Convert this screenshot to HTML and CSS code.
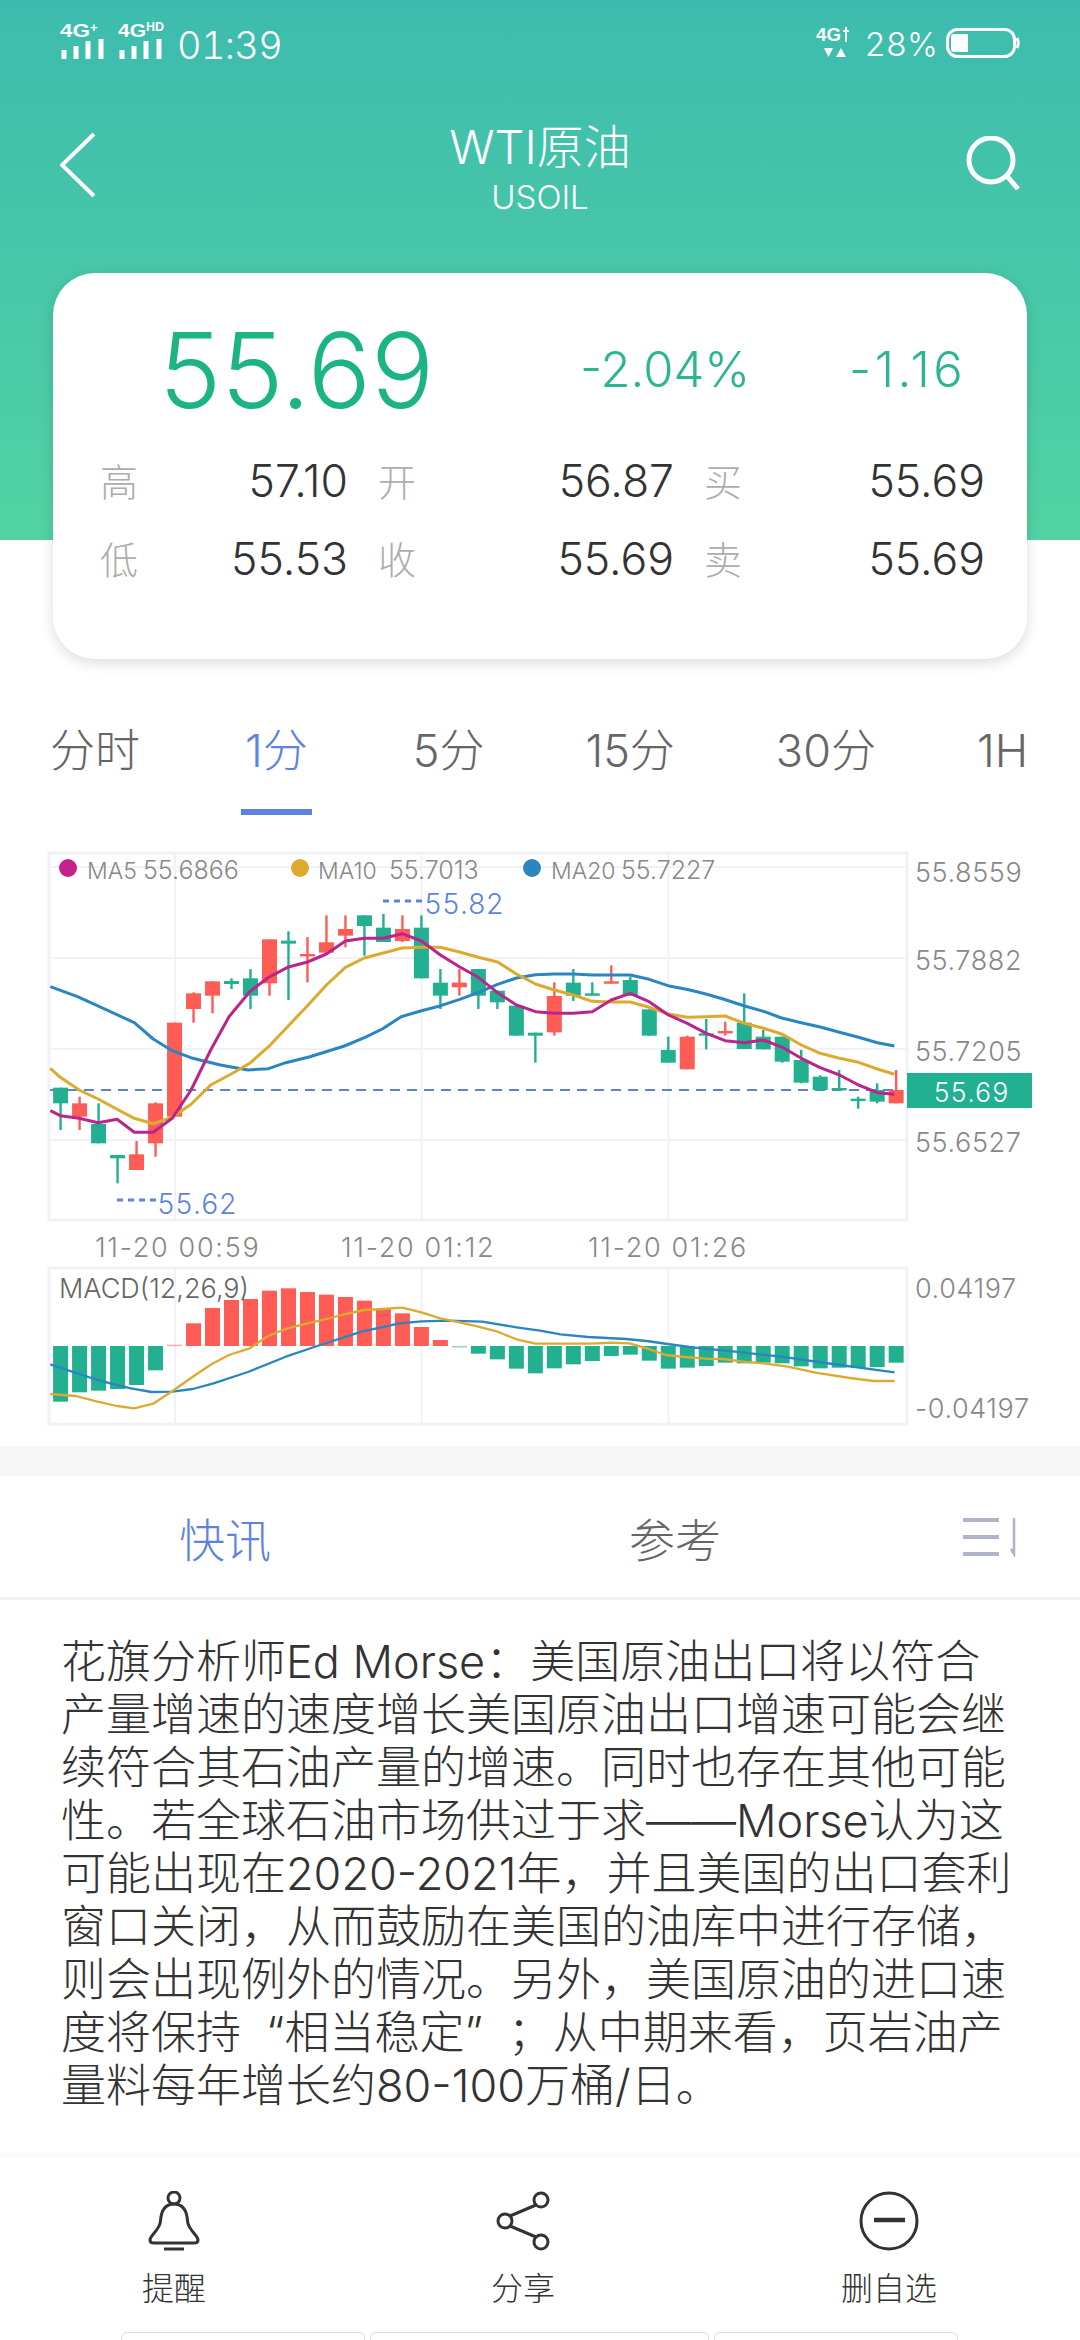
FILE: index.html
```html
<!DOCTYPE html>
<html lang="zh-CN">
<head>
    <meta charset="utf-8">
    <title>WTI原油</title>
    <link rel="stylesheet" href="styles.css">
</head>
<body>
<div class="phone">
    <header class="top">
        <div class="status">
            <svg class="net" viewBox="0 -8 50 46">
                <text x="0" y="12" class="net-text" textLength="30" lengthAdjust="spacingAndGlyphs">4G</text>
                <text x="30" y="7" class="net-small">+</text>
                <path d="M4 34v-9M16 34v-13M28 34v-18M41 34v-20" class="net-bars"/>
            </svg>
            <svg class="net second" viewBox="0 -8 50 46">
                <text x="0" y="12" class="net-text" textLength="28" lengthAdjust="spacingAndGlyphs">4G</text>
                <text x="28" y="6" class="net-small" textLength="18" lengthAdjust="spacingAndGlyphs">HD</text>
                <path d="M4 34v-9M16 34v-13M28 34v-18M41 34v-20" class="net-bars"/>
            </svg>
            <span class="time">01:39</span>
            <span class="status-gap"></span>
            <svg class="net-right" viewBox="0 -8 36 44">
                <text x="0" y="16" class="net-text" textLength="25" lengthAdjust="spacingAndGlyphs">4G</text>
                <path d="M30 2v15M27 6h6" class="net-thin"/>
                <path d="M8 23h9l-4.500 9zM20 32h10l-5-9z" fill="#fff"/>
            </svg>
            <span class="battery-pct">28%</span>
            <svg class="battery" viewBox="0 0 74 30">
                <rect x="1.500" y="1.500" width="67" height="27" rx="10" class="battery-line"/>
                <path d="M8 6h14v18H8q-3 0-3-3V9q0-3 3-3z" fill="#fff"/>
                <path d="M71 10q2.500 5 0 10" class="battery-line"/>
            </svg>
        </div>
        <nav class="nav">
            <div class="nav-icon">
                <svg width="36" height="66" viewBox="0 0 36 66"><path d="M34 2 2 33l32 31" class="nav-stroke"/></svg>
            </div>
            <div class="title">
                <div class="title-main">WTI原油</div>
                <div class="title-sub">USOIL</div>
            </div>
            <div class="nav-icon right">
                <svg width="54" height="54" viewBox="0 0 54 54"><circle cx="25" cy="24" r="22" class="nav-stroke wide"/><path d="m41 40 11 13" class="nav-stroke wide"/></svg>
            </div>
        </nav>
    </header>

    <section class="card">
        <div class="quote">
            <span class="price">55.69</span>
            <span class="pct">-2.04%</span>
            <span class="diff">-1.16</span>
        </div>
        <div class="stats">
            <div class="stat"><span class="stat-label">高</span><span class="stat-value">57.10</span></div>
            <div class="stat"><span class="stat-label">开</span><span class="stat-value">56.87</span></div>
            <div class="stat"><span class="stat-label">买</span><span class="stat-value">55.69</span></div>
            <div class="stat"><span class="stat-label">低</span><span class="stat-value">55.53</span></div>
            <div class="stat"><span class="stat-label">收</span><span class="stat-value">55.69</span></div>
            <div class="stat"><span class="stat-label">卖</span><span class="stat-value">55.69</span></div>
        </div>
    </section>

    <div class="periods">
        <span class="period">分时</span>
        <span class="period active">1分</span>
        <span class="period">5分</span>
        <span class="period">15分</span>
        <span class="period">30分</span>
        <span class="period">1H</span>
    </div>

    <svg id="kline" class="chart" width="1080" height="606" viewBox="0 840 1080 606">
        <g id="kline-grid"></g>
        <path d="M50 1090H895" class="last-line"/>
        <g id="kline-candles"></g>
        <g id="kline-lines"></g>
        <circle cx="68" cy="868" r="9" fill="#c6228e"/>
        <text x="87" y="879" class="legend-name">MA5</text>
        <text x="143" y="879" class="legend">55.6866</text>
        <circle cx="300" cy="868" r="9" fill="#dcaa2e"/>
        <text x="318" y="879" class="legend-name">MA10</text>
        <text x="389" y="879" class="legend">55.7013</text>
        <circle cx="532" cy="868" r="9" fill="#2a86c0"/>
        <text x="551" y="879" class="legend-name">MA20</text>
        <text x="621" y="879" class="legend">55.7227</text>
        <path d="M383 901h39" class="peak-line"/>
        <text x="424" y="914" class="peak">55.82</text>
        <path d="M117 1200h40" class="peak-line"/>
        <text x="157" y="1214" class="peak">55.62</text>
        <text x="915" y="882" class="axis">55.8559</text>
        <text x="915" y="970" class="axis">55.7882</text>
        <text x="915" y="1061" class="axis">55.7205</text>
        <text x="915" y="1152" class="axis">55.6527</text>
        <rect x="907" y="1073" width="125" height="35" fill="#21b092"/>
        <text x="971" y="1102" class="tag">55.69</text>
        <text x="95" y="1257" class="axis-time">11-20 00:59</text>
        <text x="341" y="1257" class="axis-time">11-20 01:12</text>
        <text x="588" y="1257" class="axis-time">11-20 01:26</text>

        <g id="macd-grid"></g>
        <g id="macd-bars"></g>
        <g id="macd-lines"></g>
        <text x="59" y="1298" class="macd-name">MACD(12,26,9)</text>
        <text x="915" y="1298" class="axis">0.04197</text>
        <text x="915" y="1418" class="axis">-0.04197</text>
    </svg>

    <div class="divider"></div>

    <div class="news-tabs">
        <span class="news-tab active">快讯</span>
        <span class="news-tab">参考</span>
        <svg class="sort" width="56" height="40" viewBox="0 0 56 40">
            <path d="M0 3h36M0 20h36M0 37h36" stroke="#b0b3cc" stroke-width="4"/>
            <path d="M51 1v36l-3-5" fill="none" stroke="#b0b3cc" stroke-width="2.500"/>
        </svg>
    </div>

    <article class="news">花旗分析师Ed Morse：美国原油出口将以符合<br>产量增速的速度增长美国原油出口增速可能会继<br>续符合其石油产量的增速。同时也存在其他可能<br>性。若全球石油市场供过于求——Morse认为这<br>可能出现在2020-2021年，并且美国的出口套利<br>窗口关闭，从而鼓励在美国的油库中进行存储，<br>则会出现例外的情况。另外，美国原油的进口速<br>度将保持<span class="quote-open">“</span>相当稳定<span class="quote-close">”</span>；从中期来看，页岩油产<br>量料每年增长约80-100万桶/日。</article>

    <footer class="actions">
        <div class="action">
            <svg class="action-icon" width="54" height="60" viewBox="0 0 54 60">
                <ellipse cx="27" cy="7" rx="6" ry="6"/>
                <path d="M27 13C17 13 14 22 13.500 30 13 39 3 44 3 49q0 3 4 3h40q4 0 4-3C51 44 41 39 40.500 30 40 22 37 13 27 13z"/>
                <path d="M17 58h20"/>
            </svg>
            <span class="action-label">提醒</span>
        </div>
        <div class="action">
            <svg class="action-icon" width="54" height="60" viewBox="0 0 54 60">
                <circle cx="45" cy="9" r="7"/><circle cx="9" cy="30" r="7"/><circle cx="45" cy="51" r="7"/>
                <path d="M14 25 40 14M14 35 40 46"/>
            </svg>
            <span class="action-label">分享</span>
        </div>
        <div class="action">
            <svg class="action-icon" width="60" height="60" viewBox="0 0 60 60">
                <circle cx="30" cy="30" r="28"/><path d="M15 29h31" class="thick"/>
            </svg>
            <span class="action-label">删自选</span>
        </div>
    </footer>
    <div class="keys">
        <span class="key small"></span>
        <span class="key wide"></span>
        <span class="key small"></span>
    </div>
</div>
<script src="chart.js"></script>
</body>
</html>
```

FILE: styles.css
```css
* {
    box-sizing: border-box;
}
html, body {
    margin: 0;
    padding: 0;
    background: #fff;
}
body {
    font-family: Inter, "Noto Sans CJK SC", sans-serif;
    font-weight: 300;
}
.phone {
    width: 1080px;
    height: 2340px;
    overflow: hidden;
    display: flex;
    flex-direction: column;
    background: #fff;
}

/* header */
.top {
    height: 540px;
    flex: none;
    background: linear-gradient(#3dbbae, #52d3a3);
    color: #fff;
}
.status {
    display: flex;
    align-items: flex-start;
    height: 98px;
    padding: 17px 60px 0;
}
.net {
    width: 50px;
    height: 46px;
    flex: none;
}
.second {
    margin-left: 8px;
}
.net-text {
    font: 700 19px "Liberation Sans", sans-serif;
    fill: #fff;
}
.net-small {
    font: 700 13px "Liberation Sans", sans-serif;
    fill: #fff;
}
.net-bars {
    stroke: #fff;
    stroke-width: 5;
    fill: none;
}
.net-thin {
    stroke: #fff;
    stroke-width: 2;
    fill: none;
}
.time {
    margin-left: 9px;
    margin-top: 8px;
    font-size: 38px;
    line-height: 40px;
    font-variant-numeric: tabular-nums;
    letter-spacing: -.7px;
}
.status-gap {
    flex: 1;
}
.net-right {
    width: 36px;
    height: 44px;
}
.battery-pct {
    margin-left: 12px;
    margin-top: 10px;
    font-size: 33px;
    line-height: 34px;
    font-variant-numeric: tabular-nums;
}
.battery {
    width: 74px;
    height: 30px;
    margin-left: 8px;
    margin-top: 11px;
}
.battery-line {
    fill: none;
    stroke: #fff;
    stroke-width: 3;
}
.nav {
    display: flex;
    align-items: flex-start;
    padding: 0 60px;
}
.nav-icon {
    width: 70px;
    padding-top: 34px;
}
.nav-icon.right {
    display: flex;
    justify-content: flex-end;
    padding-top: 38px;
}
.nav-stroke {
    fill: none;
    stroke: #fff;
    stroke-width: 4;
}
.nav-stroke.wide {
    stroke-width: 5;
}
.title {
    flex: 1;
    text-align: center;
}
.title-main {
    margin-top: 21px;
    font-size: 47px;
    line-height: 56px;
}
.title-sub {
    font-size: 33px;
    line-height: 36px;
    margin-top: 4px;
}

/* quote card */
.card {
    flex: none;
    height: 386px;
    margin: -267px 53px 0;
    padding: 0 46px 0 47px;
    background: #fff;
    border-radius: 42px;
    box-shadow: 0 4px 14px rgba(0, 0, 0, .14);
    position: relative;
}
.quote {
    display: flex;
    align-items: center;
    height: 165px;
    padding: 28px 0 0 59px;
}
.price {
    width: 421px;
    font-size: 105px;
    line-height: 134px;
    color: #1cb385;
}
.pct {
    width: 269px;
    font-size: 49px;
}
.diff {
    font-size: 49px;
    letter-spacing: 3.500px;
}
.pct, .diff {
    color: #2bb692;
}
.stats {
    display: grid;
    grid-template-columns: 244px 292px 277px;
    column-gap: 34px;
    row-gap: 18px;
    margin-top: 13px;
}
.stat {
    display: flex;
    justify-content: space-between;
    align-items: center;
    height: 60px;
}
.stat-label {
    margin-top: -3px;
    font-size: 38px;
    color: #adadad;
}
.stat-value {
    margin-right: -4px;
    font-size: 44.500px;
    color: #333;
}

/* period tabs */
.periods {
    flex: none;
    display: flex;
    justify-content: space-between;
    align-items: flex-start;
    margin-top: 62px;
    padding: 0 52px 0 50px;
    height: 94px;
}
.period {
    font-size: 45px;
    line-height: 60px;
    padding-bottom: 28px;
    color: #666;
}
.period.active {
    padding-left: 4px;
    padding-right: 4px;
    color: #5e82e0;
    border-bottom: 6px solid #5e82e0;
}

/* charts */
.chart {
    display: block;
    flex: none;
}
#kline {
    margin-top: 25px;
}
.grid-line {
    stroke: #f0f2f7;
    stroke-width: 2;
    fill: none;
}
.grid-box {
    stroke: #f0f2f7;
    stroke-width: 3;
    fill: none;
}
.last-line {
    stroke: #5f82c9;
    stroke-width: 2;
    stroke-dasharray: 10 7;
}
.ma-line {
    fill: none;
    stroke-width: 3;
    stroke-linejoin: round;
}
.macd-line {
    fill: none;
    stroke-width: 2.300;
    stroke-linejoin: round;
}
.legend {
    font-size: 25px;
    fill: #888;
}
.legend-name {
    font-size: 23px;
    fill: #888;
}
.axis {
    font-size: 27px;
    letter-spacing: .6px;
    fill: #888;
}
.axis-time {
    font-size: 27px;
    letter-spacing: 1.700px;
    fill: #888;
}
.peak {
    font-size: 28px;
    fill: #5e82e0;
    font-variant-numeric: tabular-nums;
}
.peak-line {
    stroke: #5e82e0;
    stroke-width: 3;
    stroke-dasharray: 6 5;
}
.tag {
    font-size: 26.500px;
    fill: #fff;
    text-anchor: middle;
    font-variant-numeric: tabular-nums;
}
.macd-name {
    font-size: 27px;
    fill: #666;
}

/* news */
.divider {
    flex: none;
    height: 30px;
    background: #f6f6f6;
}
.news-tabs {
    flex: none;
    display: grid;
    grid-template-columns: 450px 450px 1fr;
    align-items: center;
    height: 124px;
    border-bottom: 3px solid #f0f2f6;
}
.news-tab {
    text-align: center;
    font-size: 46px;
    color: #666;
}
.news-tab.active {
    color: #5e82e0;
}
.sort {
    margin-left: 63px;
}
.news {
    flex: 1;
    padding: 35px 0 0 61px;
    font-size: 45px;
    line-height: 53px;
    color: #333;
    white-space: nowrap;
}
.quote-open {
    padding-left: 25px;
}
.quote-close {
    padding-right: 25px;
}

/* bottom actions */
.actions {
    flex: none;
    display: grid;
    grid-template-columns: 348px 350px 382px;
    height: 175px;
    padding-top: 34px;
    box-shadow: 0 -3px 5px rgba(0, 0, 0, .03);
}
.action {
    display: flex;
    flex-direction: column;
    align-items: center;
}
.action-icon {
    flex: none;
    fill: none;
    stroke: #333;
    stroke-width: 3;
}
.action-icon .thick {
    stroke-width: 4.500;
}
.action-label {
    margin-top: 16px;
    font-size: 32px;
    line-height: 44px;
    color: #333;
}
.keys {
    flex: none;
    display: flex;
    gap: 5px;
    height: 8px;
    padding-left: 121px;
}
.key {
    height: 20px;
    background: #fff;
    border: 1px solid #ddd;
    border-radius: 6px;
}
.key.small {
    width: 244px;
}
.key.wide {
    width: 339px;
}
```

FILE: chart.js
```js
// values are read in a 2.904 x 3 scale, so they stay close to the source picture
const NS = "http://www.w3.org/2000/svg";
const RED = "#ff5c55";
const GREEN = "#22b091";
const GRID_X = [175, 421.5, 668.5];

function el(parent, tag, attrs) {
    const node = document.createElementNS(NS, tag);
    for (const key in attrs) node.setAttribute(key, attrs[key]);
    parent.appendChild(node);
    return node;
}

function px(z) {
    return (z / 2.904).toFixed(1);
}

function barX(i) {
    return 60.6 + i * 18.99;
}

function drawLine(parent, points, top, color, cls) {
    const d = points.map(p => px(p[0]) + "," + (top + p[1] / 3).toFixed(1)).join(" ");
    el(parent, "polyline", { points: d, stroke: color, class: cls });
}

// [color, bodyTop, bodyBottom, high, low]
const candles = [
    ["g",743,790,743,870],["r",790,830,770,870],["g",852,910,790,910],["g",945,955,945,1030],
    ["r",943,990,903,990],["r",790,910,787,950],["r",548,830,548,830],["r",460,507,457,548],
    ["r",424,467,424,520],["g",423,432,415,447],["g",415,467,387,507],["r",298,430,298,467],
    ["g",302,311,274,480],["r",342,348,291,427],["r",307,338,226,338],["r",267,287,226,322],
    ["g",226,258,226,347],["g",263,306,222,306],["r",267,303,226,306],["g",263,415,226,415],
    ["g",428,467,387,507],["r",428,442,387,467],["g",387,467,387,507],["g",452,487,452,507],
    ["g",497,587,497,587],["g",578,587,578,668],["r",468,577,427,587],["g",428,467,387,483],
    ["g",460,467,427,467],["r",424,431,376,431],["g",420,467,410,467],["g",508,587,508,587],
    ["g",630,668,590,668],["r",590,688,587,688],["g",580,585,537,628],["r",573,580,545,587],
    ["g",548,627,460,627],["g",590,628,570,628],["g",590,665,590,668],["g",660,728,630,730],
    ["g",710,750,706,750],["g",744,749,690,749],["g",776,781,770,806],["g",750,785,730,790],
    ["r",750,790,690,790]
];

const ma20 = [[146,440],[225,470],[300,505],[390,548],[445,597],[500,632],[560,655],[640,675],[720,690],[780,686],[830,668],[900,650],[1000,618],[1060,592],[1110,567],[1165,530],[1224,512],[1280,497],[1335,478],[1390,457],[1445,433],[1500,414],[1555,404],[1610,402],[1665,402],[1720,405],[1830,405],[1885,418],[1940,437],[2000,449],[2050,462],[2100,477],[2160,497],[2220,515],[2270,534],[2327,548],[2382,561],[2438,577],[2493,592],[2548,608],[2597,618]];
const ma10 = [[146,685],[175,712],[230,750],[285,777],[340,808],[390,835],[445,851],[500,832],[555,793],[612,735],[670,703],[725,670],[780,620],[835,560],[893,497],[948,435],[1003,382],[1058,354],[1113,339],[1168,324],[1224,322],[1279,322],[1334,336],[1389,352],[1445,366],[1500,402],[1555,432],[1610,450],[1665,465],[1720,484],[1775,486],[1830,486],[1885,502],[1941,522],[1996,532],[2051,530],[2106,528],[2162,550],[2217,565],[2272,583],[2327,615],[2382,640],[2438,655],[2493,667],[2548,687],[2597,703]];
const ma5 = [[146,812],[175,827],[230,835],[285,848],[340,838],[390,877],[445,877],[500,835],[555,750],[612,630],[665,530],[725,455],[780,412],[835,382],[893,366],[948,342],[1003,303],[1058,295],[1113,295],[1168,281],[1224,303],[1279,345],[1334,380],[1389,412],[1445,458],[1500,495],[1555,515],[1610,520],[1665,520],[1720,515],[1775,480],[1830,460],[1885,485],[1941,525],[1996,550],[2051,580],[2106,602],[2162,608],[2217,600],[2272,622],[2327,655],[2382,683],[2438,705],[2493,735],[2548,758],[2597,763]];

// bar end measured from the picture, zero line sits at 318
const macdBars = [485,457,452,447,435,391,314,250,204,180,177,152,145,156,164,171,182,205,220,261,300,320,341,358,386,400,385,373,363,348,344,362,386,383,378,368,370,368,370,379,385,383,383,381,368];
const dif = [[146,373],[200,392],[260,412],[320,430],[380,445],[440,456],[500,455],[560,447],[620,430],[720,396],[830,350],[930,315],[1050,275],[1160,250],[1224,244],[1300,242],[1400,245],[1500,262],[1568,272],[1628,283],[1708,291],[1818,297],[1878,303],[1938,312],[2018,323],[2128,334],[2268,350],[2418,372],[2598,397]];
const dea = [[146,462],[220,468],[280,484],[340,498],[390,505],[445,491],[505,450],[560,410],[615,372],[665,345],[725,325],[780,287],[835,265],[893,250],[948,237],[1003,222],[1058,210],[1113,207],[1168,203],[1224,217],[1279,235],[1334,247],[1389,260],[1445,275],[1500,298],[1555,311],[1718,311],[1778,308],[1828,310],[1878,325],[1933,345],[1988,351],[2048,356],[2098,357],[2158,365],[2218,370],[2288,380],[2368,398],[2468,414],[2538,423],[2598,423]];

function drawGrid(parent, top, bottom, rows) {
    rows.forEach(y => el(parent, "path", { d: "M49 " + y + "H907", class: "grid-line" }));
    GRID_X.forEach(x => el(parent, "path", { d: "M" + x + " " + top + "V" + bottom, class: "grid-line" }));
    el(parent, "rect", { x: 49, y: top, width: 858, height: bottom - top, class: "grid-box" });
}

function drawKline() {
    const top = 840;
    drawGrid(document.getElementById("kline-grid"), 853, 1220, [867, 958, 1049, 1140]);

    const box = document.getElementById("kline-candles");
    candles.forEach((c, i) => {
        const color = c[0] === "r" ? RED : GREEN;
        const x = barX(i);
        el(box, "rect", { x: x - 1.2, y: top + c[3] / 3, width: 2.4, height: (c[4] - c[3]) / 3, fill: color });
        el(box, "rect", { x: x - 7.5, y: top + c[1] / 3, width: 15, height: Math.max((c[2] - c[1]) / 3, 2.4), fill: color });
    });

    const lines = document.getElementById("kline-lines");
    drawLine(lines, ma20, top, "#2a86c0", "ma-line");
    drawLine(lines, ma10, top, "#dcaa2e", "ma-line");
    drawLine(lines, ma5, top, "#b9258c", "ma-line");
}

function drawMacd() {
    const top = 1240;
    drawGrid(document.getElementById("macd-grid"), 1268, 1424, []);

    const box = document.getElementById("macd-bars");
    macdBars.forEach((end, i) => {
        const up = end < 318;
        const thin = i === 6 || i === 21;
        const y = up ? end : 318;
        const h = Math.abs(end - 318) / 3;
        el(box, "rect", {
            x: barX(i) - 7.5,
            y: top + y / 3,
            width: 15,
            height: thin ? 1.5 : h,
            fill: up ? RED : GREEN,
            opacity: thin ? 0.5 : 1
        });
    });

    const lines = document.getElementById("macd-lines");
    drawLine(lines, dif, top, "#2a86c0", "macd-line");
    drawLine(lines, dea, top, "#dcaa2e", "macd-line");
}

drawKline();
drawMacd();
```
